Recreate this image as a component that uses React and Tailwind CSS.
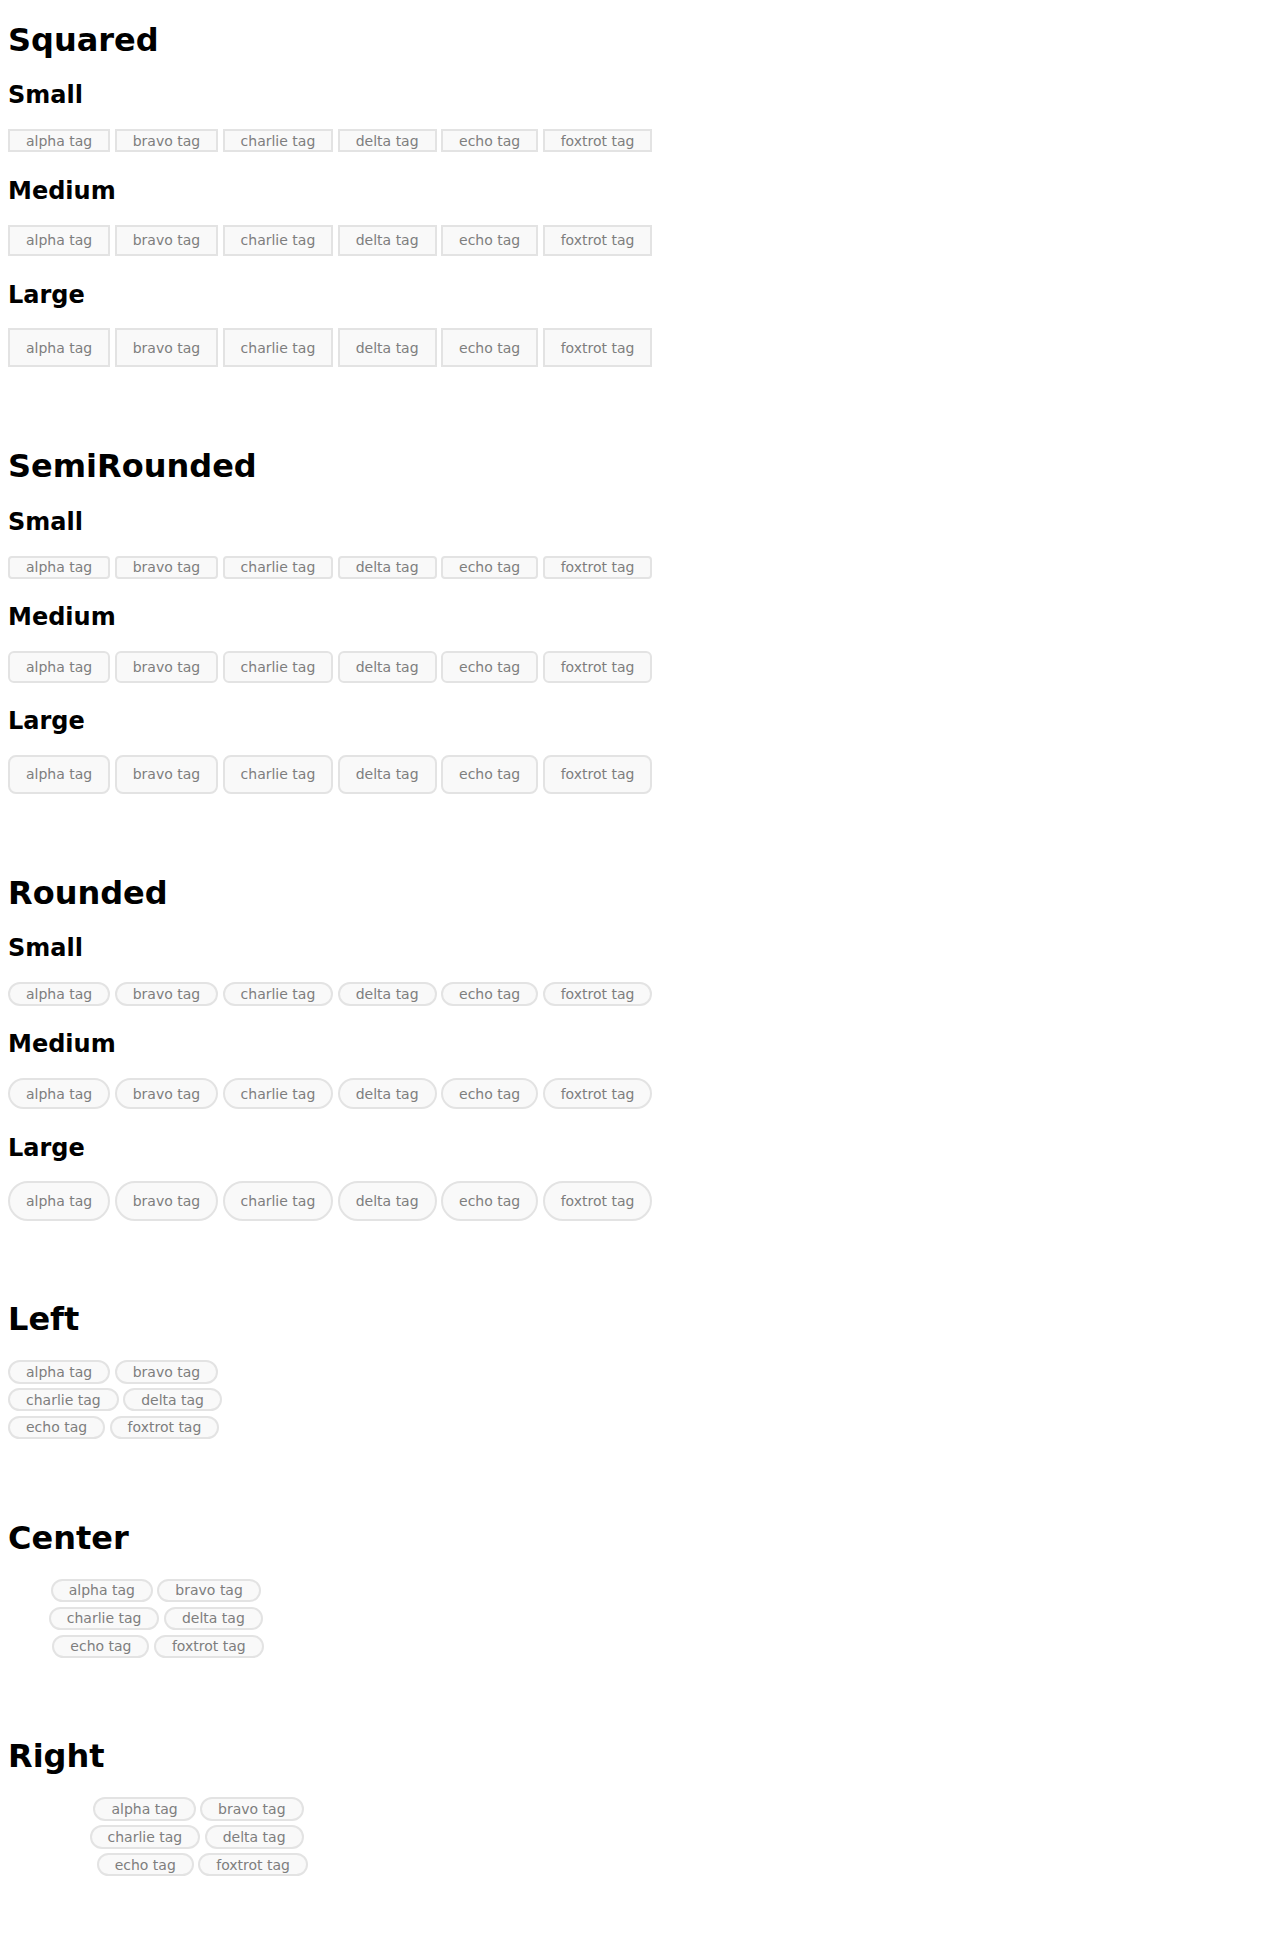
import React from 'react';

const TAGS = ['alpha tag', 'bravo tag', 'charlie tag', 'delta tag', 'echo tag', 'foxtrot tag'];

// vertical padding per size, text stays 14px
const SIZE_PAD = {
  small: 'py-[1.5px]',
  medium: 'py-[5.5px]',
  large: 'py-[9.5px]',
};

const RADIUS = {
  squared: { small: 'rounded-none', medium: 'rounded-none', large: 'rounded-none' },
  semi: { small: 'rounded-[4px]', medium: 'rounded-[6px]', large: 'rounded-[8px]' },
  rounded: { small: 'rounded-full', medium: 'rounded-full', large: 'rounded-full' },
};

const ALIGN = {
  left: 'justify-start',
  center: 'justify-center',
  right: 'justify-end',
};

function Tag({ label, size, shape, last }) {
  return (
    <span
      className={`block mb-[4.5px] ${last ? 'mr-0' : 'mr-[4.45px]'} border-2 border-[#e3e3e3] bg-[#f9f9f9] px-[16px] text-[14px] leading-[16.3px] text-[#7e7e7e] whitespace-nowrap ${SIZE_PAD[size]} ${RADIUS[shape][size]}`}
    >
      {label}
    </span>
  );
}

function TagList({ size = 'small', shape = 'rounded', align = 'left', narrow = false, className = '' }) {
  return (
    <div className={`flex flex-wrap ${ALIGN[align]} ${narrow ? 'w-[300px]' : ''} ${className}`}>
      {TAGS.map((t, i) => (
        <Tag key={t} label={t} size={size} shape={shape} last={i === TAGS.length - 1} />
      ))}
    </div>
  );
}

function Title({ children }) {
  return <h1 className="mt-[21.6px] text-[32px] leading-[37px] font-bold text-black">{children}</h1>;
}

function SizeTitle({ children, first }) {
  return (
    <h2 className={`${first ? 'mt-[22.5px]' : 'mt-[20px]'} text-[24px] leading-[28px] font-bold text-black`}>
      {children}
    </h2>
  );
}

function ShapeSection({ title, shape }) {
  return (
    <section className="flex flex-col mb-[54.6px]">
      <Title>{title}</Title>
      <SizeTitle first>Small</SizeTitle>
      <TagList size="small" shape={shape} className="mt-[20px]" />
      <SizeTitle>Medium</SizeTitle>
      <TagList size="medium" shape={shape} className="mt-[20px]" />
      <SizeTitle>Large</SizeTitle>
      <TagList size="large" shape={shape} className="mt-[19.5px]" />
    </section>
  );
}

function AlignSection({ title, align }) {
  return (
    <section className="flex flex-col mb-[54.6px]">
      <Title>{title}</Title>
      <TagList size="small" shape="rounded" align={align} narrow className="mt-[22px]" />
    </section>
  );
}

export default function App() {
  return (
    <div className="flex flex-col bg-white px-[8px] min-h-[1955px] font-['DejaVu_Sans',sans-serif]">
      <ShapeSection title="Squared" shape="squared" />
      <ShapeSection title="SemiRounded" shape="semi" />
      <ShapeSection title="Rounded" shape="rounded" />
      <AlignSection title="Left" align="left" />
      <AlignSection title="Center" align="center" />
      <AlignSection title="Right" align="right" />
    </div>
  );
}
